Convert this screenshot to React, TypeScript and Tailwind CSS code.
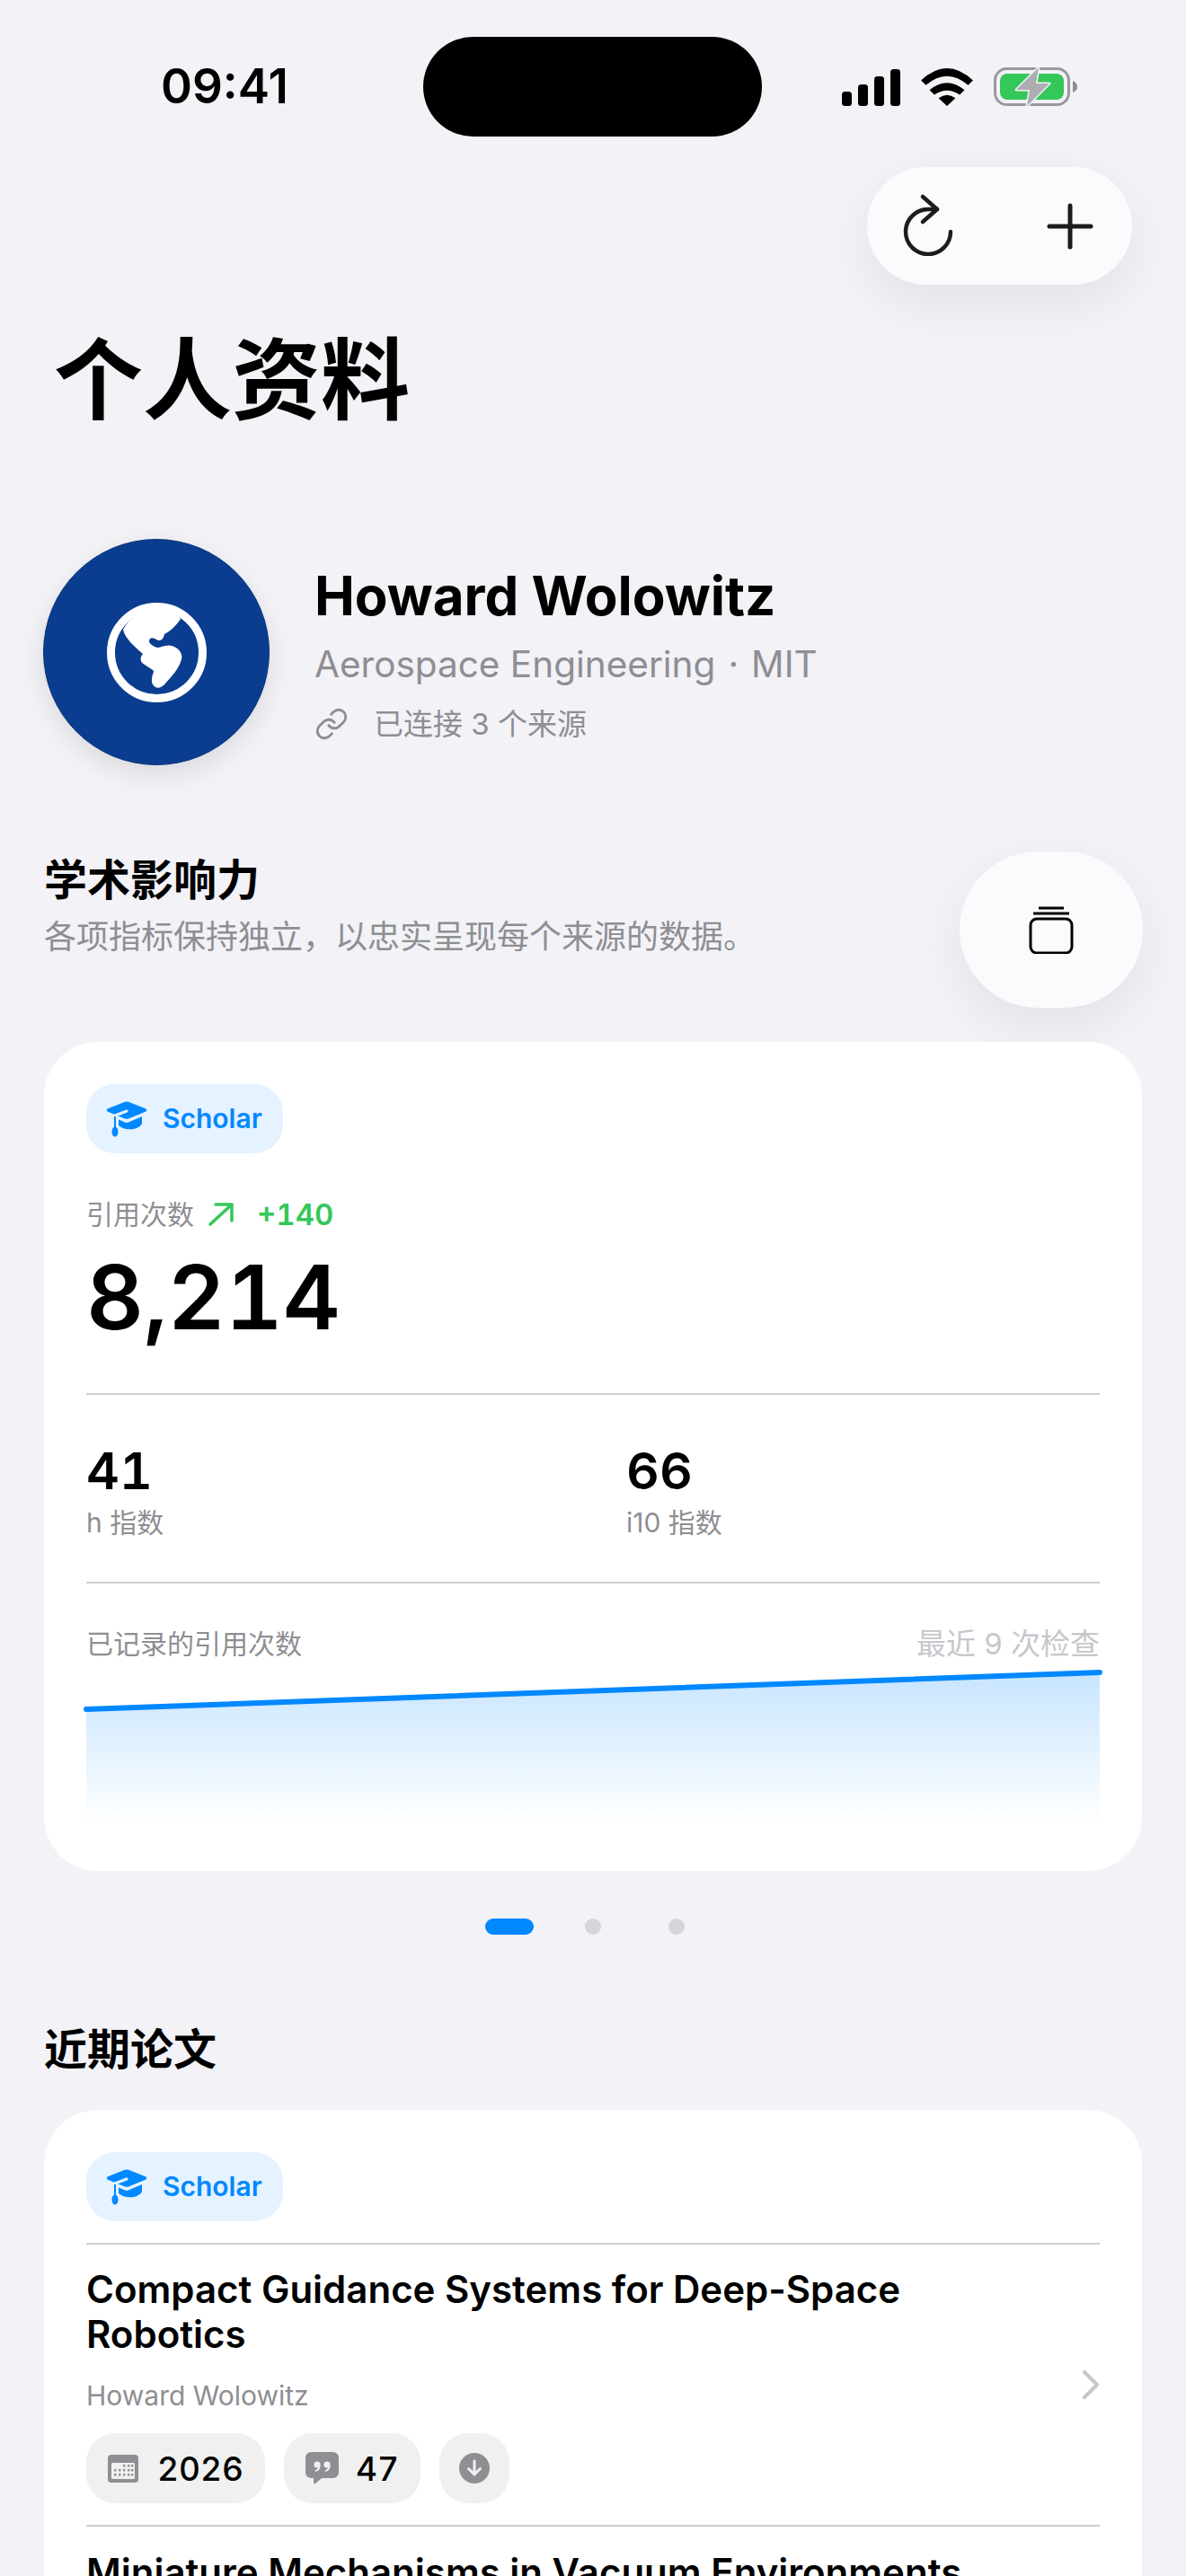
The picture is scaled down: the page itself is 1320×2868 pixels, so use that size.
import React from "react";

const Hat = () => (
  <svg width="46" height="40" viewBox="0 0 46 40" className="shrink-0">
    <path d="M1.5 8.5 L21 .8 Q23 0 25 .8 L44.5 8.5 Q46 10 44.5 11.5 L25 19.5 Q23 20.2 21 19.5 L1.5 11.5 Q0 10 1.5 8.5Z" fill="#0088ff" />
    <path d="M14 20.5 L21 23.5 Q23 24.3 25 23.5 L40 17 V25 C36 33 20 33 14 27Z" fill="#0088ff" />
    <path d="M23 11 L10 16" stroke="#e5f2ff" strokeWidth="3" strokeLinecap="round" />
    <path d="M10 16 V30" stroke="#e5f2ff" strokeWidth="4" />
    <path d="M10 17 V30" stroke="#0088ff" strokeWidth="2" />
    <ellipse cx="10" cy="34" rx="3.5" ry="5.5" fill="#0088ff" />
  </svg>
);

const Chip = () => (
  <div className="flex h-[77px] w-[219px] shrink-0 items-center rounded-[32px] bg-[#e5f2ff] pl-[22px]">
    <Hat />
    <span className="mt-[-2px] ml-[17px] text-[30px] leading-none font-semibold text-[#0088ff]">Scholar</span>
  </div>
);

const Divider = () => <div className="h-[2px] bg-[#cfcfd2]" />;

const Calendar = () => (
  <svg width="34" height="31" viewBox="0 0 34 31">
    <rect width="34" height="31" rx="4" fill="#8e8e93" />
    <rect x="4" y="9" width="26" height="18" rx="1.5" fill="#f0f0f0" />
    {[12, 17, 22].map((y) =>
      [8, 13, 18, 23, 27].map((x) => (y === 12 && x < 17 ? null : <rect key={`${x}-${y}`} x={x - 1} y={y - 1} width="2.4" height="2.4" fill="#8e8e93" />)),
    )}
  </svg>
);

const Quote = () => (
  <svg width="37" height="36" viewBox="0 0 37 36">
    <path d="M7 0 H30 Q37 0 37 7 V22 Q37 29 30 29 H18 L11 35 Q9 36 9 34 V29 H7 Q0 29 0 22 V7 Q0 0 7 0Z" fill="#8e8e93" />
    <circle cx="13" cy="14" r="3.6" fill="#f0f0f0" />
    <circle cx="24" cy="14" r="3.6" fill="#f0f0f0" />
    <path d="M15.5 15 Q15.5 20 11 21 M26.5 15 Q26.5 20 22 21" stroke="#f0f0f0" strokeWidth="2" fill="none" />
  </svg>
);

const Down = () => (
  <svg width="34" height="34" viewBox="0 0 34 34">
    <circle cx="17" cy="17" r="17" fill="#8e8e93" />
    <path d="M17 9 V24 M10.5 17.5 L17 24 L23.5 17.5" stroke="#f0f0f0" strokeWidth="3" fill="none" strokeLinecap="round" strokeLinejoin="round" />
  </svg>
);

const Pill = ({ w, icon, text, ml }: { w: string; icon: React.ReactNode; text?: string; ml?: string }) => (
  <div className={`flex h-[78px] items-center justify-center rounded-[32px] bg-[#f0f0f0] ${w}`}>
    {icon}
    {text ? <span className={`${ml} text-[37px] leading-none font-medium text-black tabular-nums`}>{text}</span> : null}
  </div>
);

export default function App() {
  return (
    <div className="relative flex h-[2868px] w-[1320px] flex-col overflow-hidden bg-[#f2f2f7] font-['Inter','Noto_Sans_CJK_SC',sans-serif] text-black">
      {/* status bar */}
      <div className="mt-[41px] flex h-[111px] shrink-0 items-center pl-[179px]">
        <div className="w-[292px] text-[53px] leading-none font-semibold">09:41</div>
        <div className="h-[111px] w-[377px] rounded-full bg-black" />
        <div className="ml-[89px] flex items-end gap-[9px] self-center">
          <svg width="65" height="41" viewBox="0 0 65 41" fill="#000">
            <rect x="0" y="25" width="11" height="16" rx="3.5" />
            <rect x="18" y="17" width="11" height="24" rx="3.5" />
            <rect x="36" y="8" width="11" height="33" rx="3.5" />
            <rect x="54" y="0" width="11" height="41" rx="3.5" />
          </svg>
          <svg width="58" height="42" viewBox="0 0 172 125" fill="#000" className="ml-[14px]">
            <path d="M0 40 Q86 -40 172 40 L156 56 Q86 -4 16 56 Z" />
            <path d="M28 72 Q86 24 144 72 L128 88 Q86 60 44 88 Z" />
            <path d="M86 125 L58 99 Q86 78 114 99 Z" />
          </svg>
          <svg width="93" height="43" viewBox="0 0 93 43" className="ml-[14px]">
            <rect x="1.5" y="1.5" width="82" height="40" rx="13" fill="none" stroke="#98989d" strokeWidth="3" />
            <rect x="7" y="7" width="71" height="29" rx="8" fill="#34c759" />
            <path d="M88 15 Q93 17 93 21.5 Q93 26 88 28Z" fill="#8e8e93" />
            <path d="M50 0 L25 25 H40 L37 43 L62 18 H47Z" fill="#aeaeb2" stroke="#f2f2f7" strokeWidth="3" paintOrder="stroke" strokeLinejoin="round" />
          </svg>
        </div>
      </div>

      {/* actions */}
      <div className="mt-[34px] flex shrink-0 justify-end pr-[60px]">
        <div className="flex h-[131px] w-[295px] items-center rounded-full bg-[#fbfbfe] pl-[37px] shadow-[0_20px_60px_rgba(0,0,0,0.07)]">
          <svg width="62" height="70" viewBox="0 0 62 70" fill="none" stroke="#1c1c1e" strokeWidth="4.5" strokeLinecap="round" strokeLinejoin="round" className="mt-[-4px]">
            <path d="M56 43 A25 25 0 1 1 31 18 L41 18" />
            <path d="M25 4 L41 18 L25 32" />
          </svg>
          <svg width="52" height="52" viewBox="0 0 52 52" fill="none" stroke="#1c1c1e" strokeWidth="5" strokeLinecap="round" className="ml-[101px]">
            <path d="M26 3 V49 M3 26 H49" />
          </svg>
        </div>
      </div>

      {/* title */}
      <h1 className="mt-[46px] ml-[60px] shrink-0 text-[99px] leading-[120px] font-bold">个人资料</h1>

      {/* profile */}
      <div className="mt-[117px] ml-[48px] flex h-[252px] shrink-0 items-start">
        <div className="flex h-[252px] w-[252px] items-center justify-center rounded-full border border-[#0a3578] bg-[#0a3d8f] shadow-[0_10px_30px_rgba(0,0,0,0.1)]">
          <svg width="111" height="111" viewBox="0 0 111 111">
            <circle cx="55.5" cy="55.5" r="51" fill="none" stroke="#fff" strokeWidth="9" />
            <path fill="#fff" d="M18 30 C20 40 32 50 40 57 C36 62 37 66 42 69 C47 73 52 74 52 77 C50 82 49 88 51 91 C54 96 60 96 65 90 C72 82 80 74 83 63 C85 56 79 50 72 48 C66 46 60 50 56 50 C52 49 46 45 47 42 C48 38 52 39 55 41 C60 44 63 40 64 35 C70 32 77 26 82 18 C72 2 35 0 18 30 Z" />
          </svg>
        </div>
        <div className="ml-[50px] flex flex-col pt-[27px]">
          <div className="text-[60px] leading-[72px] font-bold">Howard Wolowitz</div>
          <div className="mt-[14px] text-[40.5px] leading-[54px] text-[#8e8e93]">
            Aerospace Engineering<span className="mx-[14px]">·</span>MIT
          </div>
          <div className="mt-[19px] flex items-center text-[33px] leading-[40px] text-[#8e8e93]">
            <svg width="38" height="38" viewBox="0 0 24 24" fill="none" stroke="#8e8e93" strokeWidth="1.8" strokeLinecap="round" strokeLinejoin="round">
              <path d="M10 13a5 5 0 0 0 7.54.54l3-3a5 5 0 0 0-7.07-7.07l-1.72 1.71" />
              <path d="M14 11a5 5 0 0 0-7.54-.54l-3 3a5 5 0 0 0 7.07 7.07l1.71-1.71" />
            </svg>
            <span className="ml-[28px]">已连接 3 个来源</span>
          </div>
        </div>
      </div>

      {/* impact header */}
      <div className="mt-[96px] flex h-[174px] shrink-0 items-start justify-between pr-[48px] pl-[49px]">
        <div className="flex flex-col pt-[4px]">
          <div className="text-[48px] leading-[56px] font-semibold">学术影响力</div>
          <div className="mt-[13px] text-[36px] leading-[44px] text-[#8e8e93]">各项指标保持独立，以忠实呈现每个来源的数据。</div>
        </div>
        <div className="flex h-[174px] w-[204px] items-center justify-center rounded-full bg-[#fbfbfe] shadow-[0_20px_60px_rgba(0,0,0,0.07)]">
          <svg width="50" height="53" viewBox="0 0 50 53" fill="none" stroke="#000" strokeWidth="3">
            <path d="M11 2 H39 M5 8 H45" />
            <rect x="2" y="14" width="46" height="38" rx="7" />
          </svg>
        </div>
      </div>

      {/* metrics card */}
      <div className="mx-[49px] mt-[38px] flex h-[923px] shrink-0 flex-col rounded-[60px] bg-white px-[47px] pt-[47px]">
        <Chip />
        <div className="mt-[52px] flex h-[32px] items-center">
          <span className="text-[30px] leading-none text-[#8e8e93]">引用次数</span>
          <svg width="28" height="26" viewBox="0 0 28 26" fill="none" stroke="#34c759" strokeWidth="3.5" strokeLinecap="round" strokeLinejoin="round" className="ml-[16px]">
            <path d="M2 24 L26 2 M8 2 H26 V20" />
          </svg>
          <span className="ml-[26px] text-[33px] leading-none font-semibold text-[#34c759] tabular-nums">+140</span>
        </div>
        <div className="mt-[16px] text-[99px] leading-[120px] font-semibold tabular-nums">8,214</div>
        <div className="mt-[47px]"><Divider /></div>
        <div className="mt-[52px] grid grid-cols-[601px_1fr]">
          <div>
            <div className="text-[57px] leading-[66px] font-semibold tabular-nums">41</div>
            <div className="mt-[5px] text-[30px] leading-[38px] text-[#8e8e93]">h 指数</div>
          </div>
          <div>
            <div className="text-[57px] leading-[66px] font-semibold tabular-nums">66</div>
            <div className="mt-[5px] text-[30px] leading-[38px] text-[#8e8e93]">i10 指数</div>
          </div>
        </div>
        <div className="mt-[47px]"><Divider /></div>
        <div className="mt-[47px] flex h-[40px] items-center justify-between">
          <span className="text-[30px] leading-none text-[#8e8e93]">已记录的引用次数</span>
          <span className="text-[33px] leading-none text-[#c7c7cc]">最近 9 次检查</span>
        </div>
        <svg width="1128" height="180" viewBox="0 0 1128 180" className="mt-[9px] overflow-visible">
          <defs>
            <linearGradient id="area" x1="0" y1="0" x2="0" y2="1">
              <stop offset="0" stopColor="#0088ff" stopOpacity="0.22" />
              <stop offset="1" stopColor="#0088ff" stopOpacity="0" />
            </linearGradient>
          </defs>
          <path d="M0 44 L1128 3 V171 H0Z" fill="url(#area)" />
          <path d="M0 44 L1128 3" stroke="#0088ff" strokeWidth="6" strokeLinecap="round" />
        </svg>
      </div>

      {/* pager */}
      <div className="mt-[53px] grid h-[18px] shrink-0 grid-cols-[93px_93px_93px] justify-center justify-items-center">
        <div className="h-[18px] w-[54px] rounded-full bg-[#0088ff]" />
        <div className="h-[18px] w-[18px] rounded-full bg-[#d6d6da]" />
        <div className="h-[18px] w-[18px] rounded-full bg-[#d6d6da]" />
      </div>

      {/* papers */}
      <h2 className="mt-[100px] ml-[49px] shrink-0 text-[48px] leading-[56px] font-semibold">近期论文</h2>
      <div className="mx-[49px] mt-[39px] flex h-[600px] shrink-0 flex-col rounded-t-[60px] bg-white px-[47px] pt-[47px]">
        <Chip />
        <div className="mt-[24px]"><Divider /></div>
        <div className="relative">
          <div className="mt-[25px] w-[960px] text-[42px] leading-[50px] font-semibold">Compact Guidance Systems for Deep-Space Robotics</div>
          <div className="mt-[23px] text-[30px] leading-[40px] text-[#8e8e93]">Howard Wolowitz</div>
          <svg width="20" height="32" viewBox="0 0 20 32" fill="none" stroke="#c7c7cc" strokeWidth="4" strokeLinecap="round" strokeLinejoin="round" className="absolute top-[140px] right-[0px]">
            <path d="M3 2 L17 16 L3 30" />
          </svg>
          <div className="mt-[22px] flex gap-[21px]">
            <Pill w="w-[199px]" icon={<Calendar />} text="2026" ml="ml-[21px]" />
            <Pill w="w-[152px]" icon={<Quote />} text="47" ml="ml-[19px]" />
            <Pill w="w-[78px]" icon={<Down />} />
          </div>
        </div>
        <div className="mt-[24px]"><Divider /></div>
        <div className="mt-[26px] text-[42px] leading-[50px] font-semibold whitespace-nowrap">Miniature Mechanisms in Vacuum Environments</div>
      </div>
    </div>
  );
}
